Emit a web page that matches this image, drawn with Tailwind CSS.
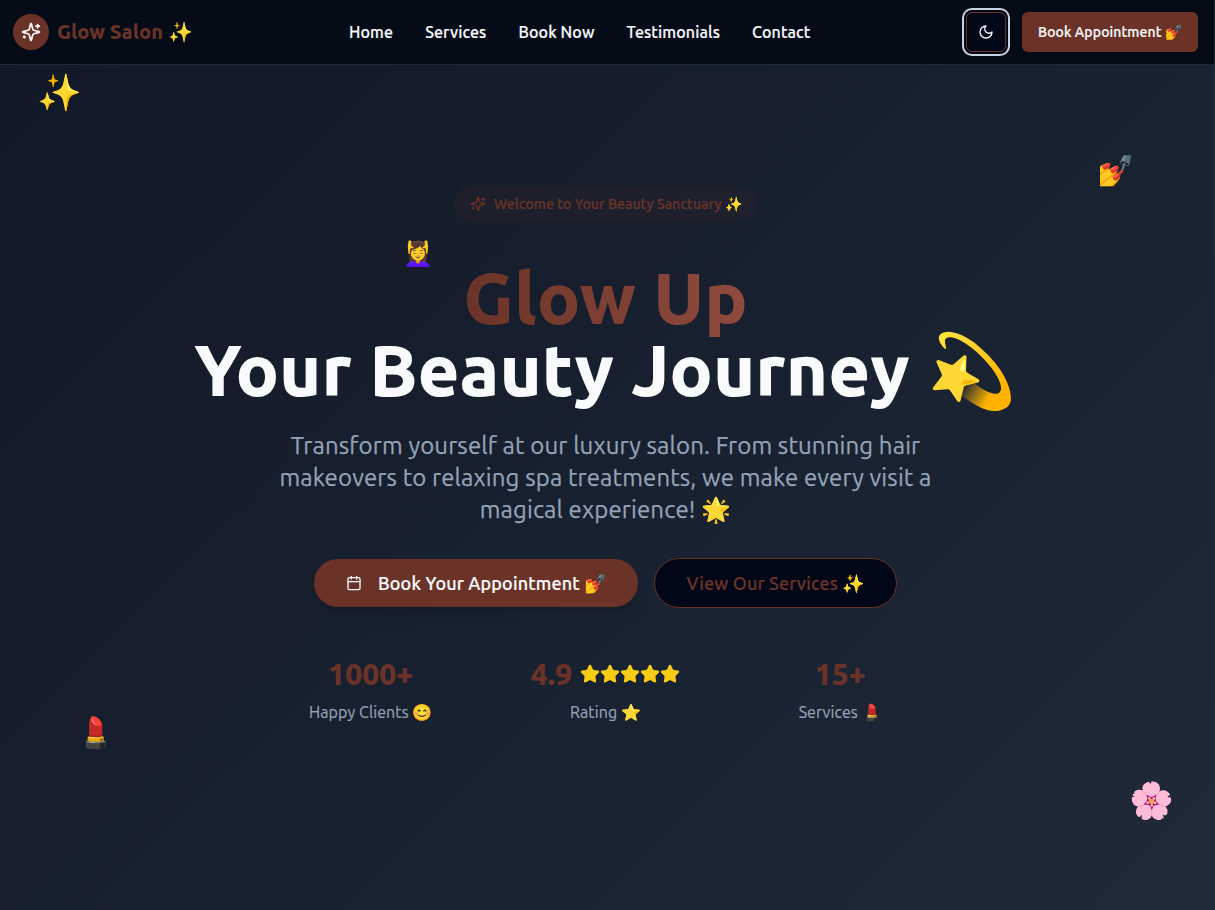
<!DOCTYPE html>
<html lang="en">
<head>
<meta charset="utf-8">
<title>Glow Salon</title>
<script src="https://cdn.jsdelivr.net/npm/@tailwindcss/browser@4"></script>
</head>
<body class="relative h-[910px] overflow-hidden bg-[#020817] font-[Ubuntu,'Noto_Sans',sans-serif] text-[#f8fafc]">
<div class="flex h-full w-full flex-col border-r border-[#262a30] bg-linear-[135deg,#111827,#1f2937]">
  <header class="relative z-10 flex h-[65px] shrink-0 items-center justify-between border-b border-[#1e293b] bg-[#050b17] pl-[13px] pr-4">
    <div class="flex w-[336px] items-center gap-2">
      <span class="flex size-9 items-center justify-center rounded-full bg-[#6b3328]">
        <svg class="size-5" viewBox="0 0 24 24" fill="none" stroke="#fff" stroke-width="2" stroke-linecap="round" stroke-linejoin="round"><path d="M9.937 15.5A2 2 0 0 0 8.5 14.063l-6.135-1.582a.5.5 0 0 1 0-.962L8.5 9.936A2 2 0 0 0 9.937 8.5l1.582-6.135a.5.5 0 0 1 .963 0L14.063 8.5A2 2 0 0 0 15.5 9.937l6.135 1.581a.5.5 0 0 1 0 .964L15.5 14.063a2 2 0 0 0-1.437 1.437l-1.582 6.135a.5.5 0 0 1-.963 0z"/><path d="M20 3v4"/><path d="M22 5h-4"/><path d="M4 17v2"/><path d="M5 18H3"/></svg>
      </span>
      <span class="text-xl font-extrabold whitespace-nowrap text-[#6b3328]">Glow Salon ✨</span>
    </div>
    <nav class="flex flex-1 gap-8 font-medium tracking-[0.008em] whitespace-nowrap [-webkit-text-stroke:0.2px]">
      <a>Home</a><a>Services</a><a>Book Now</a><a>Testimonials</a><a>Contact</a>
    </nav>
    <div class="flex items-center gap-4">
      <button class="flex size-10 items-center justify-center rounded-md border border-[#6b3328] bg-[#020817] ring-2 ring-[#cbd5e1] ring-offset-2 ring-offset-[#020817]">
        <svg class="size-4" viewBox="0 0 24 24" fill="none" stroke="currentColor" stroke-width="2" stroke-linecap="round" stroke-linejoin="round"><path d="M12 3a6 6 0 0 0 9 9 9 9 0 1 1-9-9Z"/></svg>
      </button>
      <button class="h-10 w-44 rounded-md bg-[#6b3328] text-sm font-medium tracking-[0.008em] whitespace-nowrap [-webkit-text-stroke:0.2px]">Book Appointment 💅</button>
    </div>
  </header>
  <main class="flex flex-col items-center pt-[121px] pr-[3px] text-center">
    <div class="flex h-9 w-[303px] items-center gap-2 rounded-full bg-[#6b3328]/10 px-4 text-sm font-medium tracking-[0.006em] whitespace-nowrap text-[#6b3328] [-webkit-text-stroke:0.2px]">
      <svg class="size-4 shrink-0" viewBox="0 0 24 24" fill="none" stroke="currentColor" stroke-width="2" stroke-linecap="round" stroke-linejoin="round"><path d="M9.937 15.5A2 2 0 0 0 8.5 14.063l-6.135-1.582a.5.5 0 0 1 0-.962L8.5 9.936A2 2 0 0 0 9.937 8.5l1.582-6.135a.5.5 0 0 1 .963 0L14.063 8.5A2 2 0 0 0 15.5 9.937l6.135 1.581a.5.5 0 0 1 0 .964L15.5 14.063a2 2 0 0 0-1.437 1.437l-1.582 6.135a.5.5 0 0 1-.963 0z"/><path d="M20 3v4"/><path d="M22 5h-4"/><path d="M4 17v2"/><path d="M5 18H3"/></svg>
      <span>Welcome to Your Beauty Sanctuary ✨</span>
    </div>
    <h1 class="mt-10 text-7xl leading-[72px] font-extrabold whitespace-nowrap">
      <span class="bg-linear-to-r from-[#6b3328] to-[#8f4b3d] bg-clip-text text-transparent">Glow Up</span><br>Your Beauty Journey 💫
    </h1>
    <p class="mt-6 w-[672px] text-2xl leading-8 tracking-[0.0055em] text-[#94a3b8] [-webkit-text-stroke:0.25px]">Transform yourself at our luxury salon. From stunning hair makeovers to relaxing spa treatments, we make every visit a magical experience! 🌟</p>
    <div class="mt-8 flex items-center gap-4 text-lg font-medium tracking-[0.008em] [-webkit-text-stroke:0.2px]">
      <button class="flex h-12 w-[324px] items-center gap-4 rounded-full bg-[#6b3328] px-8 whitespace-nowrap shadow-lg">
        <svg class="size-4 shrink-0" viewBox="0 0 24 24" fill="none" stroke="currentColor" stroke-width="2" stroke-linecap="round" stroke-linejoin="round"><path d="M8 2v4M16 2v4M3 10h18"/><rect width="18" height="18" x="3" y="4" rx="2"/></svg>
        <span>Book Your Appointment 💅</span>
      </button>
      <button class="h-[50px] w-[243px] rounded-full border border-[#6b3328] bg-[#020817] whitespace-nowrap text-[#6b3328]">View Our Services ✨</button>
    </div>
    <div class="mt-12 grid w-[672px] grid-cols-3 gap-8 tracking-[0.0055em] text-[#94a3b8] [-webkit-text-stroke:0.2px]">
      <div><div class="mb-2 text-3xl leading-9 font-extrabold text-[#6b3328]">1000+</div><div>Happy Clients 😊</div></div>
      <div><div class="mb-2 flex items-center justify-center gap-2 text-3xl leading-9 font-extrabold text-[#6b3328]">4.9
        <span class="flex text-[#facc15]">
          <svg class="size-5" viewBox="0 0 24 24" fill="currentColor" stroke="currentColor" stroke-width="2" stroke-linejoin="round"><path d="M11.525 2.295a.53.53 0 0 1 .95 0l2.31 4.679a2.123 2.123 0 0 0 1.595 1.16l5.166.756a.53.53 0 0 1 .294.904l-3.736 3.638a2.123 2.123 0 0 0-.611 1.878l.882 5.14a.53.53 0 0 1-.771.56l-4.618-2.428a2.122 2.122 0 0 0-1.973 0L6.396 21.01a.53.53 0 0 1-.77-.56l.881-5.139a2.122 2.122 0 0 0-.611-1.879L2.16 9.795a.53.53 0 0 1 .294-.906l5.165-.755a2.122 2.122 0 0 0 1.597-1.16z"/></svg>
          <svg class="size-5" viewBox="0 0 24 24" fill="currentColor" stroke="currentColor" stroke-width="2" stroke-linejoin="round"><path d="M11.525 2.295a.53.53 0 0 1 .95 0l2.31 4.679a2.123 2.123 0 0 0 1.595 1.16l5.166.756a.53.53 0 0 1 .294.904l-3.736 3.638a2.123 2.123 0 0 0-.611 1.878l.882 5.14a.53.53 0 0 1-.771.56l-4.618-2.428a2.122 2.122 0 0 0-1.973 0L6.396 21.01a.53.53 0 0 1-.77-.56l.881-5.139a2.122 2.122 0 0 0-.611-1.879L2.16 9.795a.53.53 0 0 1 .294-.906l5.165-.755a2.122 2.122 0 0 0 1.597-1.16z"/></svg>
          <svg class="size-5" viewBox="0 0 24 24" fill="currentColor" stroke="currentColor" stroke-width="2" stroke-linejoin="round"><path d="M11.525 2.295a.53.53 0 0 1 .95 0l2.31 4.679a2.123 2.123 0 0 0 1.595 1.16l5.166.756a.53.53 0 0 1 .294.904l-3.736 3.638a2.123 2.123 0 0 0-.611 1.878l.882 5.14a.53.53 0 0 1-.771.56l-4.618-2.428a2.122 2.122 0 0 0-1.973 0L6.396 21.01a.53.53 0 0 1-.77-.56l.881-5.139a2.122 2.122 0 0 0-.611-1.879L2.16 9.795a.53.53 0 0 1 .294-.906l5.165-.755a2.122 2.122 0 0 0 1.597-1.16z"/></svg>
          <svg class="size-5" viewBox="0 0 24 24" fill="currentColor" stroke="currentColor" stroke-width="2" stroke-linejoin="round"><path d="M11.525 2.295a.53.53 0 0 1 .95 0l2.31 4.679a2.123 2.123 0 0 0 1.595 1.16l5.166.756a.53.53 0 0 1 .294.904l-3.736 3.638a2.123 2.123 0 0 0-.611 1.878l.882 5.14a.53.53 0 0 1-.771.56l-4.618-2.428a2.122 2.122 0 0 0-1.973 0L6.396 21.01a.53.53 0 0 1-.77-.56l.881-5.139a2.122 2.122 0 0 0-.611-1.879L2.16 9.795a.53.53 0 0 1 .294-.906l5.165-.755a2.122 2.122 0 0 0 1.597-1.16z"/></svg>
          <svg class="size-5" viewBox="0 0 24 24" fill="currentColor" stroke="currentColor" stroke-width="2" stroke-linejoin="round"><path d="M11.525 2.295a.53.53 0 0 1 .95 0l2.31 4.679a2.123 2.123 0 0 0 1.595 1.16l5.166.756a.53.53 0 0 1 .294.904l-3.736 3.638a2.123 2.123 0 0 0-.611 1.878l.882 5.14a.53.53 0 0 1-.771.56l-4.618-2.428a2.122 2.122 0 0 0-1.973 0L6.396 21.01a.53.53 0 0 1-.77-.56l.881-5.139a2.122 2.122 0 0 0-.611-1.879L2.16 9.795a.53.53 0 0 1 .294-.906l5.165-.755a2.122 2.122 0 0 0 1.597-1.16z"/></svg>
        </span></div><div>Rating ⭐</div></div>
      <div><div class="mb-2 text-3xl leading-9 font-extrabold text-[#6b3328]">15+</div><div>Services 💄</div></div>
    </div>
  </main>
</div>
<span class="absolute top-[72px] left-[37px] text-4xl leading-10">✨</span>
<span class="absolute top-[152px] left-[1097px] text-3xl leading-9">💅</span>
<span class="absolute top-[238px] left-[403px] text-2xl leading-8">💆‍♀️</span>
<span class="absolute top-[714px] left-[77px] text-3xl leading-9">💄</span>
<span class="absolute top-[780px] left-[1129px] text-4xl leading-10">🌸</span>
</body>
</html>
